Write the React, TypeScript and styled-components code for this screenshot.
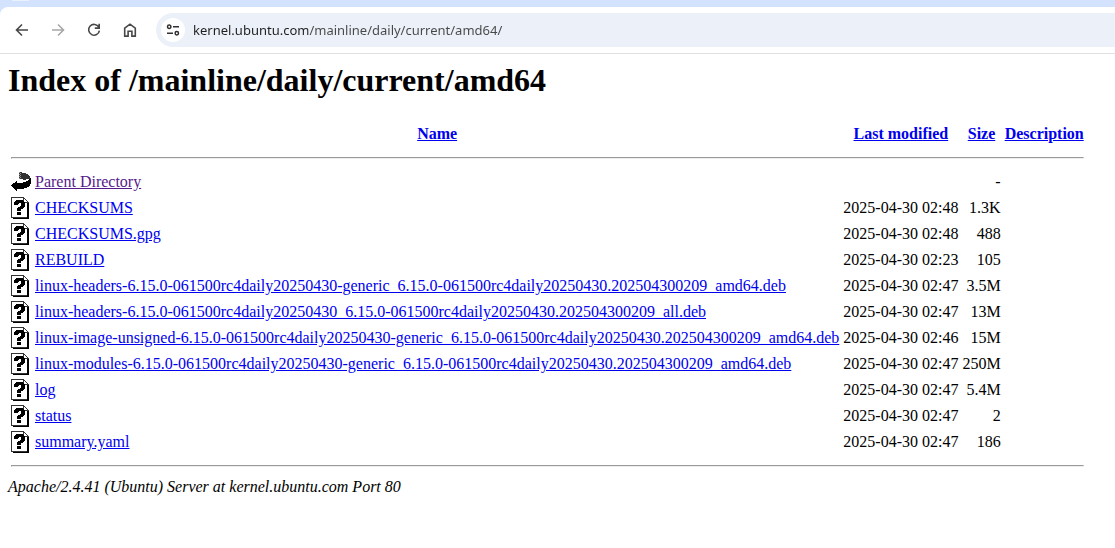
import React from "react";
import styled, { createGlobalStyle } from "styled-components";

const GlobalStyle = createGlobalStyle`
  body {
    margin: 0;
    background: #fff;
    color: #000;
    font: 16px "Liberation Serif", "Times New Roman", serif;
  }
`;

const TabStrip = styled.div`
  height: 7px;
  background: #d3e3fd;
`;

const TabEdge = styled.div`
  width: 17px;
  height: 1px;
  margin-left: 12px;
  background: #e9f1fe;
`;

const ToolbarBacking = styled.div`
  background: #d3e3fd;
`;

const Toolbar = styled.nav`
  display: flex;
  align-items: center;
  gap: 8px;
  height: 46px;
  padding-left: 8px;
  background: #fff;
  border-bottom: 1px solid #dfe1e5;
  border-top-left-radius: 8px;
`;

const ToolButton = styled.button`
  display: flex;
  align-items: center;
  justify-content: center;
  width: 28px;
  height: 28px;
  padding: 0;
  border: 0;
  border-radius: 50%;
  background: none;
  color: #474747;

  &:disabled {
    color: #a8a8a8;
  }
`;

const AddressBar = styled.div`
  display: flex;
  flex: 1;
  align-items: center;
  gap: 8px;
  height: 34px;
  margin-left: 4px;
  padding-left: 5px;
  background: #ecf0f9;
  border-radius: 17px 0 0 17px;
`;

const SiteInfoButton = styled(ToolButton)`
  width: 24px;
  height: 24px;
  background: #fff;
  color: #303030;
`;

const UrlInput = styled.input`
  flex: 1;
  min-width: 0;
  height: 24px;
  padding: 0;
  border: 0;
  outline: 0;
  font: 13px "Noto Sans", "Segoe UI", sans-serif;
  color: #474747;
  background: linear-gradient(to right, #1f1f1f 115px, #474747 115px);
  background-clip: text;
  -webkit-text-fill-color: transparent;
`;

const Page = styled.main`
  padding: 8px;
`;

const Title = styled.h1`
  margin: 0 0 22px;
  font-size: 32px;
  line-height: 36px;
`;

const Listing = styled.table`
  border-spacing: 2px;
  line-height: 18px;

  th,
  td {
    padding: 1px;
    white-space: nowrap;
  }
`;

const HeadRow = styled.tr`
  height: 24px;
`;

const NumberCell = styled.td`
  text-align: right;
`;

const Rule = styled.hr`
  margin: 8px 0;
  border: 1px solid;
  border-color: #9a9a9a #eee #eee #9a9a9a;
`;

const Link = styled.a<{ $visited?: boolean }>`
  color: ${(p) => (p.$visited ? "#551a8b" : "#0000ee")};
`;

const FileIcon = styled.svg`
  display: block;
  width: 20px;
  height: 22px;
`;

const Server = styled.address`
  line-height: 18px;
`;

const files = [
  ["CHECKSUMS", "2025-04-30 02:48", "1.3K"],
  ["CHECKSUMS.gpg", "2025-04-30 02:48", "488"],
  ["REBUILD", "2025-04-30 02:23", "105"],
  ["linux-headers-6.15.0-061500rc4daily20250430-generic_6.15.0-061500rc4daily20250430.202504300209_amd64.deb", "2025-04-30 02:47", "3.5M"],
  ["linux-headers-6.15.0-061500rc4daily20250430_6.15.0-061500rc4daily20250430.202504300209_all.deb", "2025-04-30 02:47", "13M"],
  ["linux-image-unsigned-6.15.0-061500rc4daily20250430-generic_6.15.0-061500rc4daily20250430.202504300209_amd64.deb", "2025-04-30 02:46", "15M"],
  ["linux-modules-6.15.0-061500rc4daily20250430-generic_6.15.0-061500rc4daily20250430.202504300209_amd64.deb", "2025-04-30 02:47", "250M"],
  ["log", "2025-04-30 02:47", "5.4M"],
  ["status", "2025-04-30 02:47", "2"],
  ["summary.yaml", "2025-04-30 02:47", "186"],
];

const UnknownIcon = () => (
  <FileIcon viewBox="0 0 20 22" shapeRendering="crispEdges" role="img" aria-label="File">
    <path fill="#333" d="M0 0h13v1H1v19h15v1H0z" />
    <path fill="#000" d="M16 5h2v17H2v-1h14z" />
    <path fill="#333" d="M12 0h1v1h1v1h1v1h1v1h1v1h1v1h-6z" />
    <path fill="#fff" d="M13 2h1v1h1v1h1v1h-3z" />
    <path fill="#000" d="M5 3h7v1h1v1h1v5h-1v1h-1v1h-2v2H6v-3h1v-1h2V9h1V6H8v1H7v1H3V5h1V4h1zM6 15h4v3H6z" />
  </FileIcon>
);

const BackIcon = () => (
  <FileIcon viewBox="0 0 20 22" shapeRendering="crispEdges" role="img" aria-label="Parent">
    <path fill="#333" d="M8 1h3v1h4v1h2v1h1v1h1v2h1v2h-2v-1h-3v1h-3V8H8z" />
    <path fill="#999" d="M8 1h1v1H8zM9 2h1v1H9zM8 3h1v1H8zM9 4h1v1H9zM8 5h1v1H8zM9 6h1v1H9zM8 7h1v1H8z" />
    <path fill="#000" d="M5 10h1v2h6v-1h3v-1h2V9h1V8h1V7h1v6h-1v2h-1v1h-2v1h-3v1H6v2H5v-1H4v-1H3v-1H2v-1H1v-1H0v-1h1v-1h1v-1h2v-1h1z" />
  </FileIcon>
);

export default function App() {
  return (
    <>
      <GlobalStyle />
      <TabStrip>
        <TabEdge />
      </TabStrip>
      <ToolbarBacking>
        <Toolbar aria-label="Browser">
          <ToolButton aria-label="Back">
            <svg width="16" height="16" viewBox="0 0 16 16" fill="none" stroke="currentColor" strokeWidth="1.6">
              <path d="M14 8H3M8 2.5 2.5 8 8 13.5" />
            </svg>
          </ToolButton>
          <ToolButton aria-label="Forward" disabled>
            <svg width="16" height="16" viewBox="0 0 16 16" fill="none" stroke="currentColor" strokeWidth="1.6">
              <path d="M2 8h11M8 2.5 13.5 8 8 13.5" />
            </svg>
          </ToolButton>
          <ToolButton aria-label="Reload">
            <svg width="16" height="16" viewBox="0 0 16 16" fill="none" stroke="currentColor" strokeWidth="1.6">
              <path d="M12.8 5.2A5.4 5.4 0 1 0 13.4 8.6M13.2 1.8v4.3H8.8" />
            </svg>
          </ToolButton>
          <ToolButton aria-label="Home">
            <svg width="16" height="16" viewBox="0 0 16 16" fill="none" stroke="currentColor" strokeWidth="1.6">
              <path d="M2.7 6.2 8 2.2l5.3 4v7.9h-3.4V9.2H6.1v4.9H2.7z" />
            </svg>
          </ToolButton>
          <AddressBar>
            <SiteInfoButton aria-label="View site information">
              <svg width="14" height="14" viewBox="0 0 14 14" fill="none" stroke="currentColor" strokeWidth="1.5">
                <circle cx="3.2" cy="3.7" r="1.7" />
                <path d="M7 3.7h6M1 10.3h6" />
                <circle cx="10.8" cy="10.3" r="1.7" />
              </svg>
            </SiteInfoButton>
            <UrlInput
              aria-label="Address"
              spellCheck={false}
              defaultValue="kernel.ubuntu.com/mainline/daily/current/amd64/"
            />
          </AddressBar>
        </Toolbar>
      </ToolbarBacking>
      <Page>
        <Title>Index of /mainline/daily/current/amd64</Title>
        <Listing>
          <thead>
            <HeadRow>
              <th />
              <th><Link href="#name">Name</Link></th>
              <th><Link href="#modified">Last modified</Link></th>
              <th><Link href="#size">Size</Link></th>
              <th><Link href="#description">Description</Link></th>
            </HeadRow>
            <tr><th colSpan={5}><Rule /></th></tr>
          </thead>
          <tbody>
            <tr>
              <td><BackIcon /></td>
              <td><Link $visited href="#parent">Parent Directory</Link></td>
              <td />
              <NumberCell>-</NumberCell>
              <td />
            </tr>
            {files.map(([name, modified, size]) => (
              <tr key={name}>
                <td><UnknownIcon /></td>
                <td><Link href={`#${name}`}>{name}</Link></td>
                <NumberCell>{modified}</NumberCell>
                <NumberCell>{size}</NumberCell>
                <td />
              </tr>
            ))}
            <tr><td colSpan={5}><Rule /></td></tr>
          </tbody>
        </Listing>
        <Server>Apache/2.4.41 (Ubuntu) Server at kernel.ubuntu.com Port 80</Server>
      </Page>
    </>
  );
}
